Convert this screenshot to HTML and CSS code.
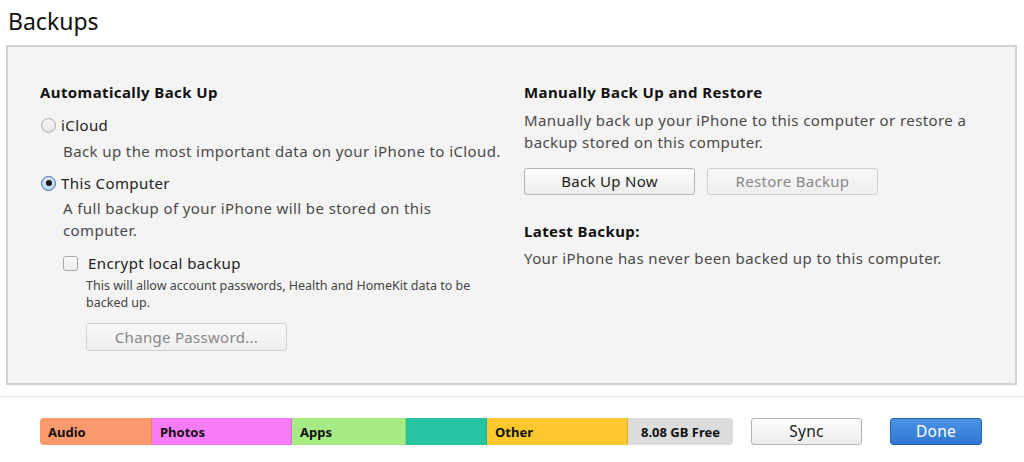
FILE: index.html
```html
<!DOCTYPE html>
<html lang="en">
<head>
    <meta charset="UTF-8">
    <meta name="viewport" content="width=device-width, initial-scale=1.0">
    <title>Backups</title>
    <link rel="stylesheet" href="styles.css">
</head>
<body>
    <h1 class="title">Backups</h1>

    <div class="panel">
        <div class="col col-left">
            <h3 class="head">Automatically Back Up</h3>

            <div class="opt opt-icloud">
                <span class="radio"></span>
                <span class="opt-label">iCloud</span>
            </div>
            <p class="desc desc-icloud">Back up the most important data on your iPhone to iCloud.</p>

            <div class="opt opt-computer">
                <span class="radio checked"></span>
                <span class="opt-label">This Computer</span>
            </div>
            <p class="desc desc-computer">A full backup of your iPhone will be stored on this<br>computer.</p>

            <div class="check-row">
                <span class="checkbox"></span>
                <span class="opt-label">Encrypt local backup</span>
            </div>
            <p class="small">This will allow account passwords, Health and HomeKit data to be<br>backed up.</p>
            <button class="btn btn-disabled btn-pass">Change Password...</button>
        </div>

        <div class="col col-right">
            <h3 class="head">Manually Back Up and Restore</h3>
            <p class="desc desc-manual">Manually back up your iPhone to this computer or restore a<br>backup stored on this computer.</p>
            <div class="btn-row">
                <button class="btn btn-wide">Back Up Now</button>
                <button class="btn btn-wide btn-disabled">Restore Backup</button>
            </div>
            <h3 class="head head-latest">Latest Backup:</h3>
            <p class="desc desc-latest">Your iPhone has never been backed up to this computer.</p>
        </div>
    </div>

    <div class="footer">
        <div class="storage">
            <div class="seg seg-audio">Audio</div>
            <div class="seg seg-photos">Photos</div>
            <div class="seg seg-apps">Apps</div>
            <div class="seg seg-teal"></div>
            <div class="seg seg-other">Other</div>
            <div class="seg seg-free">8.08 GB Free</div>
        </div>
        <button class="btn btn-sync">Sync</button>
        <button class="btn btn-done">Done</button>
    </div>
</body>
</html>
```

FILE: styles.css
```css
* {
    margin: 0;
    padding: 0;
    box-sizing: border-box;
    font-family: "Noto Sans", "Open Sans", sans-serif;
}
body {
    background: white;
    color: #444;
    width: 1024px;
    height: 462px;
    overflow: hidden;
}
.title {
    font-size: 23px;
    font-weight: normal;
    color: #111;
    line-height: 30px;
    padding: 6px 0 0 8px;
    height: 45px;
}
.panel {
    margin-left: 6px;
    width: 1011px;
    height: 340px;
    border: 2px solid #d2d2d2;
    background: #f4f4f4;
    display: flex;
    padding: 34px 0 0 32px;
}
.col-left {
    width: 484px;
}
.col-right {
    flex: 1;
}
.head {
    font-size: 15px;
    letter-spacing: 0.4px;
    font-weight: bold;
    color: #111;
    line-height: 22px;
}
.desc {
    font-size: 15px;
    letter-spacing: 0.4px;
    line-height: 22px;
    color: #4a4a4a;
    padding-left: 23px;
}
.opt, .check-row {
    display: flex;
    align-items: center;
    height: 22px;
    gap: 5px;
    color: #222;
    font-size: 15px;
    letter-spacing: 0.4px;
}
.opt-icloud {
    margin-top: 11px;
}
.desc-icloud {
    margin-top: 4px;
}
.opt-computer {
    margin-top: 10px;
}
.desc-computer {
    margin-top: 3px;
}
.radio {
    width: 15px;
    height: 15px;
    border-radius: 50%;
    border: 1px solid #a8a8a8;
    background: linear-gradient(#f6f6f6, #e4e4e4);
    margin-left: 1px;
    position: relative;
}
.radio.checked {
    border-color: #3a6aa8;
    background: linear-gradient(#dbe8f7, #b8d0ee);
}
.radio.checked::after {
    content: "";
    position: absolute;
    left: 3.5px;
    top: 3.5px;
    width: 6px;
    height: 6px;
    border-radius: 50%;
    background: #1c1c1c;
}
.check-row {
    margin-top: 11px;
    padding-left: 23px;
    gap: 10px;
}
.checkbox {
    width: 15px;
    height: 15px;
    border: 1px solid #a8a8a8;
    border-radius: 3px;
    background: linear-gradient(#fafafa, #ececec);
}
.small {
    font-size: 12.5px;
    line-height: 17px;
    color: #444;
    padding-left: 46px;
    margin-top: 3px;
}
.btn {
    font-size: 15px;
    letter-spacing: 0.3px;
    color: #222;
    border: 1px solid #b4b4b4;
    border-radius: 3px;
    background: linear-gradient(#fefefe, #ececec);
    height: 28px;
    line-height: 26px;
}
.btn-disabled {
    color: #888;
    border-color: #cfcfcf;
    background: linear-gradient(#f8f8f8, #eeeeee);
}
.btn-pass {
    margin: 12px 0 0 46px;
    width: 201px;
}
.desc-manual {
    padding-left: 0;
    margin-top: 6px;
}
.btn-row {
    display: flex;
    gap: 12px;
    margin-top: 15px;
}
.btn-wide {
    width: 171px;
    height: 27px;
    line-height: 25px;
}
.head-latest {
    margin-top: 25px;
}
.desc-latest {
    padding-left: 0;
    margin-top: 5px;
}
.footer {
    margin-top: 11px;
    border-top: 1px solid #e6e6e6;
    display: flex;
    align-items: center;
    padding: 21px 0 0 40px;
}
.storage {
    display: flex;
    width: 693px;
    height: 27px;
    border-radius: 4px;
    overflow: hidden;
}
.seg {
    font-size: 13px;
    font-weight: bold;
    color: #111;
    line-height: 28px;
    padding-left: 8px;
    border-right: 1px solid rgba(0, 0, 0, 0.1);
}
.seg-audio {
    width: 112px;
    background: #fd9a6d;
}
.seg-photos {
    width: 140px;
    background: #f87cf6;
}
.seg-apps {
    width: 114px;
    background: #a6eb83;
}
.seg-teal {
    width: 81px;
    background: #27c4a1;
}
.seg-other {
    width: 141px;
    background: #fec72d;
}
.seg-free {
    flex: 1;
    background: #dcdcdc;
    border-right: none;
    padding-left: 13px;
}
.btn-sync {
    margin-left: 18px;
    width: 111px;
    height: 27px;
    line-height: 25px;
    font-size: 15.5px;
}
.btn-done {
    margin-left: 28px;
    width: 92px;
    height: 27px;
    line-height: 25px;
    font-size: 15.5px;
    color: white;
    border-color: #2a64b0;
    background: linear-gradient(#4c95e6, #2f76d2);
}
```
